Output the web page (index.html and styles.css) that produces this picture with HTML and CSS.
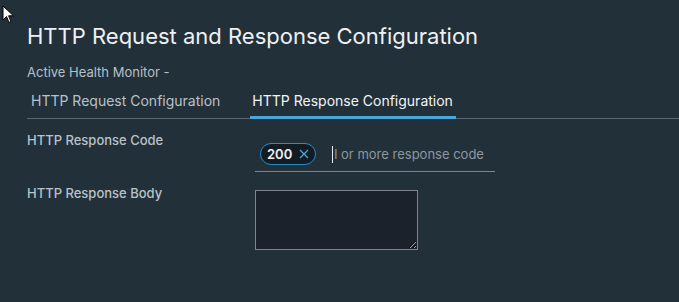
FILE: index.html
```html
<!DOCTYPE html>
<html lang="en">
<head>
    <meta charset="UTF-8">
    <title>HTTP Request and Response Configuration</title>
    <link rel="stylesheet" href="styles.css">
</head>
<body>
    <svg class="cursor" width="13" height="20" viewBox="0 0 13 20">
        <path d="M1 1 L1 15 L4.5 11.5 L7 17.5 L9 16.6 L6.6 10.8 L11.5 10.8 Z" fill="#fff" stroke="#000" stroke-width="1"/>
    </svg>

    <div class="page">
        <h1 class="title">HTTP Request and Response Configuration</h1>
        <div class="subtitle">Active Health Monitor -</div>

        <div class="tabs">
            <div class="tab">HTTP Request Configuration</div>
            <div class="tab active">HTTP Response Configuration</div>
        </div>

        <div class="form">
            <div class="row row-code">
                <label class="label">HTTP Response Code</label>
                <div class="tag-input">
                    <span class="chip">200
                        <svg class="chip-x" width="10" height="10" viewBox="0 0 10 10">
                            <path d="M1 1 L9 9 M9 1 L1 9" stroke="#4aa8dc" stroke-width="1.2"/>
                        </svg>
                    </span>
                    <span class="caret"></span>
                    <span class="placeholder">l or more response code</span>
                </div>
            </div>
            <div class="row">
                <label class="label label-body">HTTP Response Body</label>
                <textarea class="body-area"></textarea>
            </div>
        </div>
    </div>
</body>
</html>
```

FILE: styles.css
```css
body {
    margin: 0;
    background: #22303a;
    font-family: "Inter", "Noto Sans", sans-serif;
    color: #e7ebee;
    height: 302px;
    overflow: hidden;
    position: relative;
}

.cursor {
    position: absolute;
    top: 5px;
    left: 2px;
}

.page {
    padding: 22px 0 0 27px;
}

.title {
    margin: 0;
    font-weight: 400;
    font-size: 22px;
    line-height: 28px;
    color: #eef1f3;
}

.subtitle {
    margin-top: 14px;
    font-size: 13px;
    line-height: 17px;
    color: #b7c0c7;
}

.tabs {
    display: flex;
    gap: 27px;
    margin-top: 11px;
    border-bottom: 1px solid #5a6670;
}

.tab {
    padding: 0 3px 6px 4px;
    font-size: 14px;
    line-height: 18px;
    color: #b9c2c9;
    border-bottom: 3px solid transparent;
    margin-bottom: -1px;
}

.tab.active {
    padding-left: 2px;
    color: #f2f4f6;
    border-bottom-color: #48a8dc;
}

.form {
    padding-top: 13px;
}

.row {
    display: flex;
}

.row-code {
    height: 55px;
}

.label {
    width: 228px;
    font-size: 13px;
    font-weight: 500;
    color: #b9c2c9;
}

.label-body {
    margin-top: -2px;
}

.tag-input {
    display: flex;
    align-items: center;
    width: 240px;
    height: 34px;
    margin-top: 5px;
    border-bottom: 1px solid #7b858d;
    white-space: nowrap;
}

.chip {
    display: inline-flex;
    align-items: center;
    margin-left: 5px;
    padding: 0 6px 0 6px;
    height: 20px;
    border: 1px solid #2b8bc6;
    border-radius: 11px;
    background: #141c23;
    font-size: 13px;
    font-weight: 600;
    color: #eef1f3;
}

.chip-x {
    margin-left: 7px;
}

.caret {
    width: 1px;
    height: 17px;
    margin-left: 16px;
    background: #e7ebee;
}

.placeholder {
    margin-left: 1px;
    font-size: 13px;
    color: #8d979f;
}

.body-area {
    width: 161px;
    height: 58px;
    margin: 3px 0 0 0;
    padding: 0;
    background: #1c222b;
    border: 1px solid #7d848e;
    resize: both;
}
```
